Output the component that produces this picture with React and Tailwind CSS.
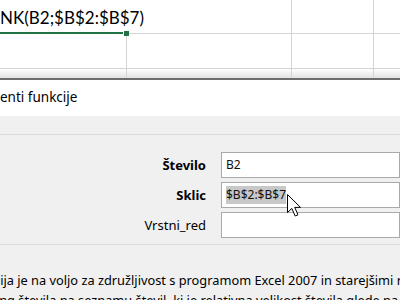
import React from "react";

const grid = "border-[#d4d4d4]";

const Cursor = () => (
  <svg
    className="absolute left-[287px] top-[194px]"
    width="17"
    height="24"
    viewBox="0 0 17 24"
  >
    <path
      d="M0.5 0.5 L0.5 18.5 L4.8 14.4 L8.2 22 L11 20.8 L7.7 13.4 L13.5 13.4 Z"
      fill="#fff"
      stroke="#000"
      strokeWidth="1"
      strokeLinejoin="miter"
    />
  </svg>
);

const Field = ({ label, bold, children }) => (
  <div className="flex items-center h-[26px]">
    <div
      className={`w-[207px] shrink-0 pr-[1px] pt-[2px] text-right text-[13px] text-black ${
        bold ? "font-bold" : ""
      }`}
    >
      {label}
    </div>
    <div className="ml-[14px] flex-1 h-[26px] border border-[#a9a9a9] bg-white flex items-center pl-[4px] text-[12px] text-[#111] whitespace-nowrap">
      {children}
    </div>
  </div>
);

export default function App() {
  return (
    <div className="relative w-[400px] h-[300px] overflow-hidden bg-white font-['Noto_Sans',sans-serif]">
      {/* sheet */}
      <div className="relative">
        <div className="flex h-[34px]">
          <div className="w-[127px] shrink-0 flex flex-col">
            <div className="h-[32px] whitespace-nowrap font-['Lato',sans-serif] text-[17px] leading-none pt-[9px] text-black">
              NK(B2;$B$2:$B$7)
            </div>
            <div className="h-[2px] w-[123px] bg-[#217346]" />
          </div>
          <div className={`w-[165px] shrink-0 border-r border-b ${grid}`} />
          <div className={`w-[82px] shrink-0 border-r border-b ${grid}`} />
          <div className={`flex-1 border-b ${grid}`} />
        </div>
        <div className="absolute left-[124px] top-[31px] w-[5px] h-[5px] bg-[#217346]" />

        <div className="flex h-[35px]">
          <div className={`w-[127px] shrink-0 border-r border-b ${grid}`} />
          <div className={`w-[165px] shrink-0 border-r border-b ${grid}`} />
          <div className={`w-[82px] shrink-0 border-r border-b ${grid}`} />
          <div className={`flex-1 border-b ${grid}`} />
        </div>
        <div className="flex h-[9px] bg-gradient-to-b from-white to-[#e2e2e2]">
          <div className={`w-[127px] shrink-0 border-r ${grid}`} />
          <div className={`w-[165px] shrink-0 border-r ${grid}`} />
          <div className={`w-[82px] shrink-0 border-r ${grid}`} />
          <div className="flex-1" />
        </div>
        <div className="h-[2px] bg-[#6d6d6d]" />
      </div>

      {/* dialog */}
      <div className="bg-[#f0f0f0] h-[220px]">
        <div className="h-[36px] bg-white flex items-center text-[13.5px] text-black whitespace-nowrap pb-[1px]">
          enti funkcije
        </div>
        <div className="h-[18px]" />
        <div className="border-t border-b border-[#dadada] pt-[17px] pb-[6px] flex flex-col gap-[4px]">
          <Field label="Število" bold>
            B2
          </Field>
          <Field label="Sklic" bold>
            <span className="bg-[#c8c8c8] leading-[18px]">$B$2:$B$7</span>
          </Field>
          <Field label="Vrstni_red" />
        </div>
        <div className="pt-[25px] text-[12.8px] leading-[20px] text-black whitespace-nowrap">
          <div className="-ml-[6px]">cija je na voljo za združljivost s programom Excel 2007 in starejšimi različicami.</div>
          <div className="-ml-[13px]">rang števila na seznamu števil, ki je relativna velikost števila glede na druge vrednosti</div>
        </div>
      </div>
      <Cursor />
    </div>
  );
}
